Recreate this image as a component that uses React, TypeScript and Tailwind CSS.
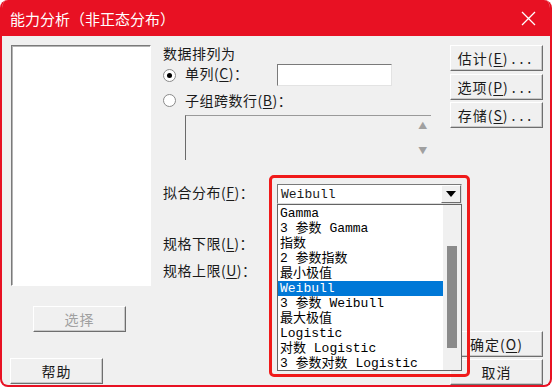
import React from 'react'

const cjk = '"Noto Sans CJK SC", "Liberation Sans", sans-serif'
const mono = '"Liberation Mono", "Noto Sans CJK SC", monospace'

function U({ children }: { children: React.ReactNode }) {
  return <span className="underline underline-offset-2">{children}</span>
}

function Dots() {
  return <span className="ml-[3px] tracking-[4px]">...</span>
}

function Btn({ children, className = '', disabled = false }: { children: React.ReactNode; className?: string; disabled?: boolean }) {
  return (
    <div
      className={`flex h-[26px] w-[93px] items-center justify-center border border-t-white border-l-white border-r-[#6e6e6e] border-b-[#6e6e6e] bg-[#f0f0f0] text-[14px] tracking-[1px] shadow-[inset_-1px_-1px_0_#c8c8c8] ${disabled ? 'text-[#a0a0a0]' : 'text-[#1a1a1a]'} ${className}`}
    >
      {children}
    </div>
  )
}

function Radio({ checked }: { checked?: boolean }) {
  return (
    <div className="flex h-[13px] w-[13px] items-center justify-center rounded-full border border-[#8a8a8a] bg-white">
      {checked && <div className="h-[5px] w-[5px] rounded-full bg-black" />}
    </div>
  )
}

const items = [
  'Gamma',
  '3 参数 Gamma',
  '指数',
  '2 参数指数',
  '最小极值',
  'Weibull',
  '3 参数 Weibull',
  '最大极值',
  'Logistic',
  '对数 Logistic',
  '3 参数对数 Logistic',
]

export default function App() {
  return (
    <div className="h-[388px] w-[554px] overflow-hidden bg-white" style={{ fontFamily: cjk }}>
      <div className="flex h-[387px] w-[552px] flex-col overflow-hidden rounded-[8px] border-2 border-t-0 border-[#e81123] bg-[#f0f0f0]">
        {/* title bar */}
        <div className="flex h-[36px] shrink-0 items-center justify-between bg-[#e81123] pl-[8px] pr-[14px] text-white">
          <span className="text-[15px] leading-none">能力分析（非正态分布）</span>
          <svg width="15" height="15" viewBox="0 0 15 15">
            <path d="M1 1 L14 14 M14 1 L1 14" stroke="white" strokeWidth="1.3" />
          </svg>
        </div>

        {/* body */}
        <div className="relative flex flex-1 text-[14px] text-[#1a1a1a]">
          {/* left column */}
          <div className="flex flex-col pl-[9px] pt-[9px]">
            <div className="h-[241px] w-[140px] border border-t-[#7a7a7a] border-l-[#7a7a7a] border-r-white border-b-white bg-white shadow-[inset_1px_1px_0_#b4b4b4]" />
            <Btn disabled className="ml-[22px] mt-[20px]">选择</Btn>
            <Btn className="ml-[-1px] mt-[26px]">帮助</Btn>
          </div>

          {/* middle column */}
          <div className="ml-[12px] flex w-[268px] flex-col pt-[8px] tracking-[0.5px]">
            <div className="h-[18px] leading-[18px]">数据排列为</div>
            <div className="mt-[2px] flex h-[22px] items-center">
              <Radio checked />
              <span className="ml-[9px] w-[92px] pb-[4px]">
                单列(<U>C</U>)：
              </span>
              <div className="h-[22px] w-[115px] border border-t-[#7a7a7a] border-l-[#7a7a7a] border-r-[#e3e3e3] border-b-[#e3e3e3] bg-white" />
            </div>
            <div className="mt-[5px] flex h-[18px] items-center">
              <Radio />
              <span className="ml-[9px]">
                子组跨数行(<U>B</U>)：
              </span>
            </div>
            <div className="ml-[22px] mt-[6px] flex h-[45px] w-[246px] border-t border-l border-t-[#9a9a9a] border-l-[#6a6a6a]">
              <div className="flex-1" />
              <div className="flex w-[16px] flex-col items-center justify-between py-[5px] text-[9px] leading-none text-[#a0a0a0]">
                <span>▲</span>
                <span>▼</span>
              </div>
            </div>
            <div className="mt-[23px] h-[18px] leading-[18px]">
              拟合分布(<U>F</U>)：
            </div>
            <div className="mt-[33px] h-[18px] leading-[18px]">
              规格下限(<U>L</U>)：
            </div>
            <div className="mt-[9px] h-[18px] leading-[18px]">
              规格上限(<U>U</U>)：
            </div>
          </div>

          {/* right column */}
          <div className="ml-[19px] flex flex-col pt-[9px]">
            <Btn>估计(<U>E</U>)<Dots /></Btn>
            <Btn className="mt-[3px]">选项(<U>P</U>)<Dots /></Btn>
            <Btn className="mt-[2px]">存储(<U>S</U>)<Dots /></Btn>
            <Btn className="mt-[203px]">确定(<U>O</U>)</Btn>
            <Btn className="mt-[2px]">取消</Btn>
          </div>

          {/* open combobox overlay */}
          <div className="absolute left-[275px] top-[148px] w-[185px]" style={{ fontFamily: mono }}>
            <div className="flex h-[20px] items-center border border-t-[#7a7a7a] border-l-[#7a7a7a] border-r-[#dcdcdc] border-b-[#dcdcdc] bg-white">
              <span className="flex-1 pl-[3px] text-[13px] leading-none">Weibull</span>
              <div className="flex h-[18px] w-[20px] items-center justify-center border border-t-white border-l-white border-r-[#6e6e6e] border-b-[#6e6e6e] bg-[#f0f0f0]">
                <svg width="10" height="6" viewBox="0 0 10 6">
                  <path d="M0 0 H10 L5 6 Z" fill="black" />
                </svg>
              </div>
            </div>
            <div className="flex h-[167px] border border-[#646464] bg-white">
              <div className="flex flex-1 flex-col pt-[1px] text-[13px] leading-[15px]">
                {items.map((it) => (
                  <div
                    key={it}
                    className={`h-[15px] whitespace-pre pl-[2px] ${it === 'Weibull' ? 'bg-[#0078d7] text-white' : 'text-black'}`}
                  >
                    {it}
                  </div>
                ))}
              </div>
              <div className="flex w-[18px] flex-col bg-[#f0f0f0] pt-[41px]">
                <div className="mx-auto h-[102px] w-[10px] bg-[#8a8a8a]" />
              </div>
            </div>
          </div>

          {/* red highlight */}
          <div className="pointer-events-none absolute left-[267px] top-[139px] h-[202px] w-[201px] rounded-[5px] border-[3px] border-[#f01a1a]" />
        </div>
      </div>
    </div>
  )
}
